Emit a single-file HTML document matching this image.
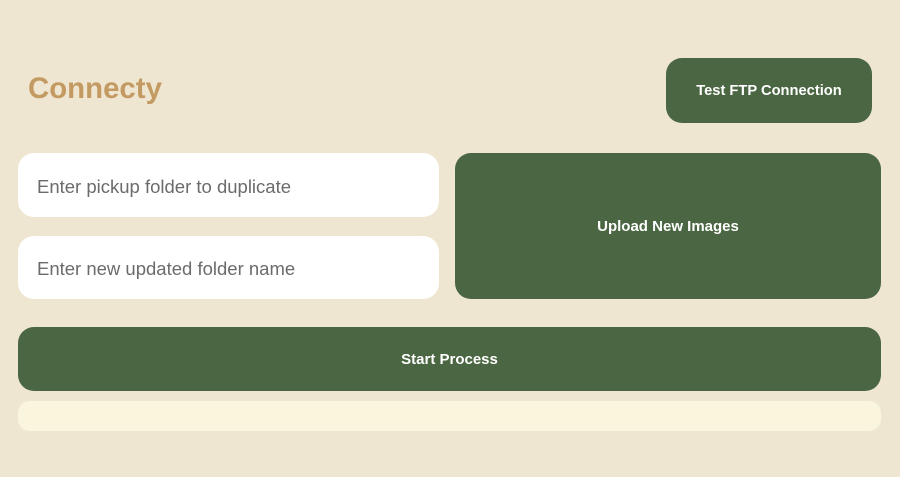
<!DOCTYPE html>
<html><head><style>
body{margin:0;width:900px;height:477px;background:#efe6d1;font-family:"Liberation Sans",Arial,sans-serif;position:relative;overflow:hidden}
.a{position:absolute;box-sizing:border-box}
.g{background:#4b6642;color:#fff;font-weight:bold;font-size:15px;display:flex;align-items:center;justify-content:center;border-radius:16px}
.i{background:#fff;border-radius:16px;color:#6b6b6b;font-size:18.5px;padding-left:19px;padding-top:3px;display:flex;align-items:center}
</style></head><body>
<div class="a" style="left:28px;top:72px;font-size:29.4px;font-weight:bold;color:#c49a63">Connecty</div>
<div class="a g" style="left:666px;top:58px;width:206px;height:65px;font-size:14.7px">Test FTP Connection</div>
<div class="a i" style="left:18px;top:153px;width:421px;height:64px">Enter pickup folder to duplicate</div>
<div class="a i" style="left:18px;top:236px;width:421px;height:63px">Enter new updated folder name</div>
<div class="a g" style="left:455px;top:153px;width:426px;height:146px">Upload New Images</div>
<div class="a g" style="left:18px;top:327px;width:863px;height:64px">Start Process</div>
<div class="a" style="left:18px;top:401px;width:863px;height:30px;background:#faf6de;border-radius:12px"></div>
</body></html>
